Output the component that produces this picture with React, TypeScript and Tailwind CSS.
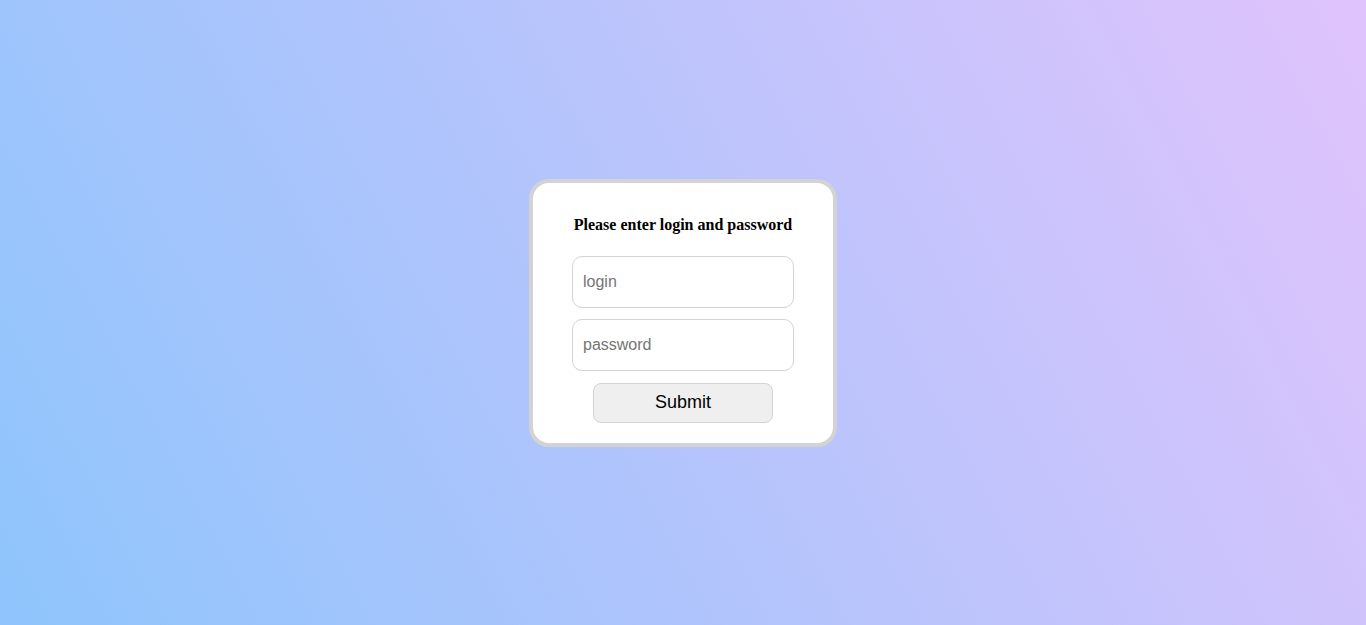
export default function App() {
  return (
    <div className="w-full h-[625px] flex items-center justify-center bg-[linear-gradient(62deg,#8ec5fc_0%,#e0c3fc_100%)]">
      {/* Login card */}
      <form
        className="w-[308px] bg-white border-4 border-[#d3d3d3] rounded-[20px] px-[39px] pt-[33px] pb-5 flex flex-col items-center"
        onSubmit={(e) => e.preventDefault()}
      >
        <h4 className="font-['Liberation_Serif',serif] font-bold text-base leading-[18px] text-black mb-[22px]">
          Please enter login and password
        </h4>
        <input
          type="text"
          placeholder="login"
          className="w-full h-[52px] border border-[#d3d3d3] rounded-[10px] px-[10px] text-base font-['Liberation_Sans',sans-serif] placeholder:text-[#757575] outline-none"
        />
        <input
          type="password"
          placeholder="password"
          className="w-full h-[52px] mt-[11px] border border-[#d3d3d3] rounded-[10px] px-[10px] text-base font-['Liberation_Sans',sans-serif] placeholder:text-[#757575] outline-none"
        />
        <button
          type="submit"
          className="w-[180px] h-10 mt-3 pb-[2px] bg-[#efefef] border border-[#d3d3d3] rounded-lg text-lg leading-none text-black font-['Liberation_Sans',sans-serif]"
        >
          Submit
        </button>
      </form>
    </div>
  );
}
